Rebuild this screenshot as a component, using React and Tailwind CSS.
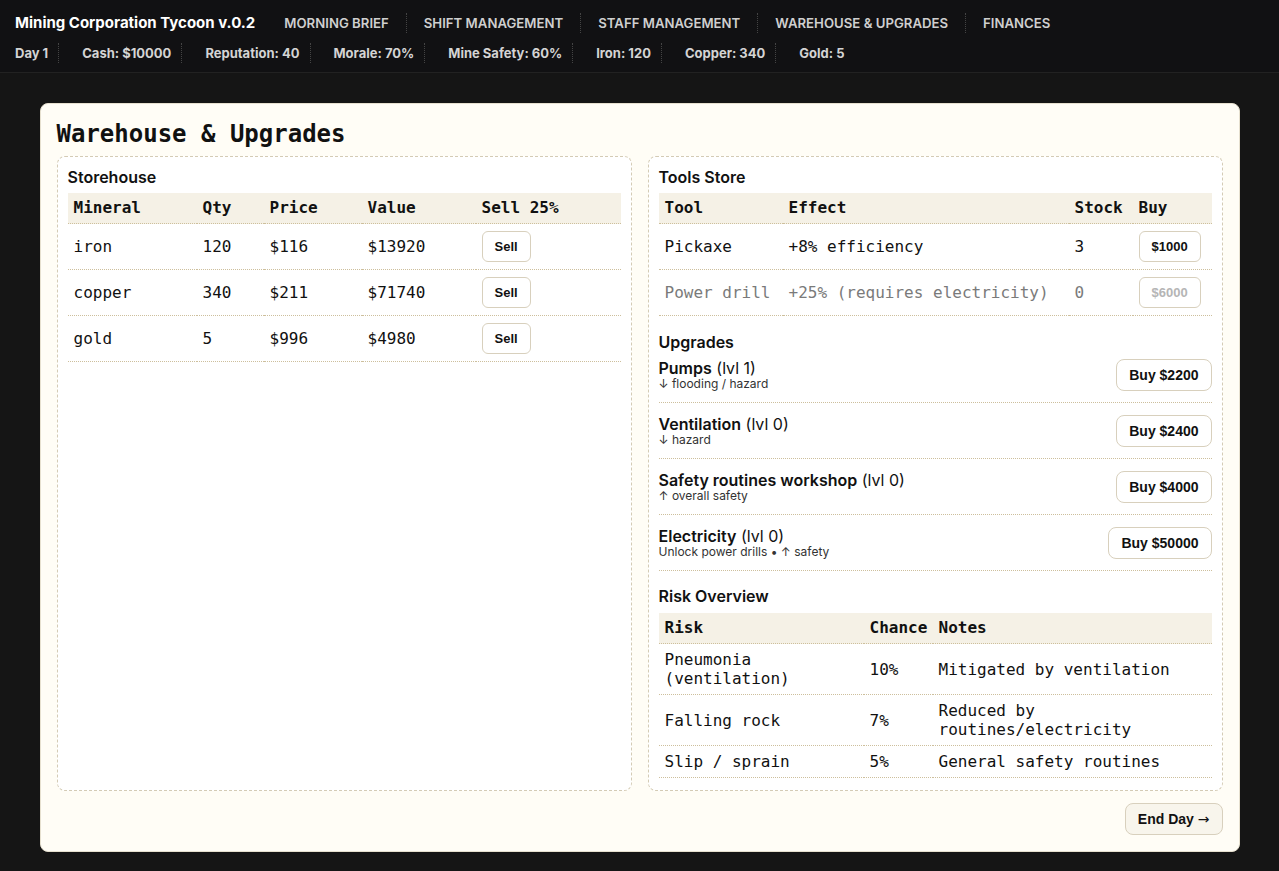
import React from 'react';

const SANS = 'font-["Inter","Liberation_Sans",sans-serif]';
const MONO = 'font-["DejaVu_Sans_Mono","Liberation_Mono",monospace]';
const BTN = 'font-["Liberation_Sans","Arial",sans-serif]';

const NAV = ['Morning Brief', 'Shift Management', 'Staff Management', 'Warehouse & Upgrades', 'Finances'];
const STATS = ['Day 1', 'Cash: $10000', 'Reputation: 40', 'Morale: 70%', 'Mine Safety: 60%', 'Iron: 120', 'Copper: 340', 'Gold: 5'];

const MINERALS = [
  { name: 'iron', qty: 120, price: 116, value: 13920 },
  { name: 'copper', qty: 340, price: 211, value: 71740 },
  { name: 'gold', qty: 5, price: 996, value: 4980 },
];

const TOOLS = [
  { name: 'Pickaxe', effect: '+8% efficiency', stock: 3, cost: 1000, ok: true },
  { name: 'Power drill', effect: '+25% (requires electricity)', stock: 0, cost: 6000, ok: false },
];

const UPGRADES = [
  { name: 'Pumps', lvl: 1, note: '↓ flooding / hazard', cost: 2200 },
  { name: 'Ventilation', lvl: 0, note: '↓ hazard', cost: 2400 },
  { name: 'Safety routines workshop', lvl: 0, note: '↑ overall safety', cost: 4000 },
  { name: 'Electricity', lvl: 0, note: 'Unlock power drills • ↑ safety', cost: 50000 },
];

const RISKS = [
  { risk: 'Pneumonia (ventilation)', chance: '10%', notes: 'Mitigated by ventilation' },
  { risk: 'Falling rock', chance: '7%', notes: 'Reduced by routines/electricity' },
  { risk: 'Slip / sprain', chance: '5%', notes: 'General safety routines' },
];

const th = 'text-left font-bold px-[6px] py-[6px] leading-[18px] border-b border-dotted border-[#cdbf9c]';
const td = 'px-[6px] py-[6px] leading-[19px] border-b border-dotted border-[#cdbf9c] align-middle';

function SmallBtn({ children, disabled }) {
  return (
    <button
      disabled={disabled}
      className={`${BTN} h-[31px] px-[12px] rounded-[6px] border border-[#d8d0bd] bg-white text-[13px] font-bold ${
        disabled ? 'text-[#b5b5b5]' : 'text-[#111]'
      }`}
    >
      {children}
    </button>
  );
}

function Heading({ children, className = '' }) {
  return <h3 className={`${SANS} text-[16px] font-semibold leading-[20px] text-[#111] ${className}`}>{children}</h3>;
}

export default function App() {
  return (
    <div className={`min-h-screen bg-[#151515] ${SANS}`}>
      {/* Top bar */}
      <header className="bg-[#111113] border-b border-[#222] px-[15px] pt-[13px] pb-[9px]">
        <div className="flex items-center">
          <span className="text-white text-[15px] font-bold leading-[20px]">Mining Corporation Tycoon v.0.2</span>
          <nav className="flex items-center ml-[12px]">
            {NAV.map((n, i) => (
              <span
                key={n}
                className={`px-[17px] text-[13.2px] font-semibold uppercase text-[#cfcfcf] leading-[20px] ${
                  i > 0 ? 'border-l border-dotted border-[#444]' : ''
                }`}
              >
                {n}
              </span>
            ))}
          </nav>
        </div>
        <div className="flex items-center gap-[23px] mt-[10px]">
          {STATS.map((s, i) => (
            <span
              key={s}
              className={`text-[13px] font-bold text-[#d4d4d4] leading-[20px] ${
                i < STATS.length - 1 ? 'pr-[10px] border-r border-dotted border-[#444]' : ''
              }`}
            >
              {s}
            </span>
          ))}
        </div>
      </header>

      <main className="pt-[30px] pb-[19px]">
        <div className="max-w-[1200px] mx-auto bg-[#fffdf6] border border-[#e6e0cf] rounded-[8px] p-[16px]">
          <h1 className={`${MONO} text-[24px] font-bold leading-[28px] text-[#111] mb-[8px]`}>Warehouse &amp; Upgrades</h1>

          <div className="grid grid-cols-2 gap-[16px]">
            {/* Storehouse */}
            <section className="bg-white border border-dashed border-[#d4cbb5] rounded-[8px] px-[10px] pt-[10px] pb-[12px]">
              <Heading className="mb-[6px]">Storehouse</Heading>
              <table className={`${MONO} w-full text-[16px] text-[#111] border-collapse table-fixed`}>
                <colgroup>
                  <col className="w-[129px]" />
                  <col className="w-[67px]" />
                  <col className="w-[98px]" />
                  <col className="w-[114px]" />
                  <col />
                </colgroup>
                <thead className="bg-[#f5f1e6]">
                  <tr>
                    <th className={th}>Mineral</th>
                    <th className={th}>Qty</th>
                    <th className={th}>Price</th>
                    <th className={th}>Value</th>
                    <th className={th}>Sell 25%</th>
                  </tr>
                </thead>
                <tbody>
                  {MINERALS.map(m => (
                    <tr key={m.name}>
                      <td className={`${td} py-[7px]`}>{m.name}</td>
                      <td className={`${td} py-[7px]`}>{m.qty}</td>
                      <td className={`${td} py-[7px]`}>${m.price}</td>
                      <td className={`${td} py-[7px]`}>${m.value}</td>
                      <td className={`${td} py-[7px]`}>
                        <SmallBtn>Sell</SmallBtn>
                      </td>
                    </tr>
                  ))}
                </tbody>
              </table>
            </section>

            {/* Right column */}
            <section className="bg-white border border-dashed border-[#d4cbb5] rounded-[8px] px-[10px] pt-[10px] pb-[12px]">
              <Heading className="mb-[6px]">Tools Store</Heading>
              <table className={`${MONO} w-full text-[16px] text-[#111] border-collapse table-fixed`}>
                <colgroup>
                  <col className="w-[124px]" />
                  <col className="w-[286px]" />
                  <col className="w-[64px]" />
                  <col />
                </colgroup>
                <thead className="bg-[#f5f1e6]">
                  <tr>
                    <th className={th}>Tool</th>
                    <th className={th}>Effect</th>
                    <th className={th}>Stock</th>
                    <th className={th}>Buy</th>
                  </tr>
                </thead>
                <tbody>
                  {TOOLS.map(t => (
                    <tr key={t.name} className={t.ok ? '' : 'text-[#7a7a7a]'}>
                      <td className={`${td} py-[7px] whitespace-nowrap`}>{t.name}</td>
                      <td className={`${td} py-[7px] whitespace-nowrap`}>{t.effect}</td>
                      <td className={`${td} py-[7px]`}>{t.stock}</td>
                      <td className={`${td} py-[7px]`}>
                        <SmallBtn disabled={!t.ok}>${t.cost}</SmallBtn>
                      </td>
                    </tr>
                  ))}
                </tbody>
              </table>

              <Heading className="mt-[16px]">Upgrades</Heading>
              <div className="flex flex-col">
                {UPGRADES.map((u, i) => (
                  <div
                    key={u.name}
                    className={`flex items-center justify-between border-b border-dotted border-[#cdbf9c] pb-[11px] ${
                      i === 0 ? 'pt-[7px]' : 'pt-[12px]'
                    }`}
                  >
                    <div className="text-[#111]">
                      <div className="text-[16px] leading-[18px]">
                        <span className="font-semibold">{u.name}</span> (lvl {u.lvl})
                      </div>
                      <div className="text-[12px] leading-[14px] text-[#333]">{u.note}</div>
                    </div>
                    <button className={`${BTN} h-[32px] px-[12px] rounded-[8px] border border-[#d8d0bd] bg-white text-[14px] font-bold text-[#111]`}>
                      Buy ${u.cost}
                    </button>
                  </div>
                ))}
              </div>

              <Heading className="mt-[15px] mb-[7px]">Risk Overview</Heading>
              <table className={`${MONO} w-full text-[16px] text-[#111] border-collapse table-fixed`}>
                <colgroup>
                  <col className="w-[205px]" />
                  <col className="w-[69px]" />
                  <col />
                </colgroup>
                <thead className="bg-[#f5f1e6]">
                  <tr>
                    <th className={th}>Risk</th>
                    <th className={th}>Chance</th>
                    <th className={th}>Notes</th>
                  </tr>
                </thead>
                <tbody>
                  {RISKS.map(r => (
                    <tr key={r.risk}>
                      <td className={td}>{r.risk}</td>
                      <td className={td}>{r.chance}</td>
                      <td className={td}>{r.notes}</td>
                    </tr>
                  ))}
                </tbody>
              </table>
            </section>
          </div>

          <div className="flex justify-end mt-[12px]">
            <button className={`${BTN} h-[32px] px-[12px] rounded-[8px] border border-[#d8d0bd] bg-[#f8f5ec] text-[14px] font-bold text-[#111]`}>
              End Day <span className='font-["DejaVu_Sans",sans-serif] font-normal'>→</span>
            </button>
          </div>
        </div>
      </main>
    </div>
  );
}
